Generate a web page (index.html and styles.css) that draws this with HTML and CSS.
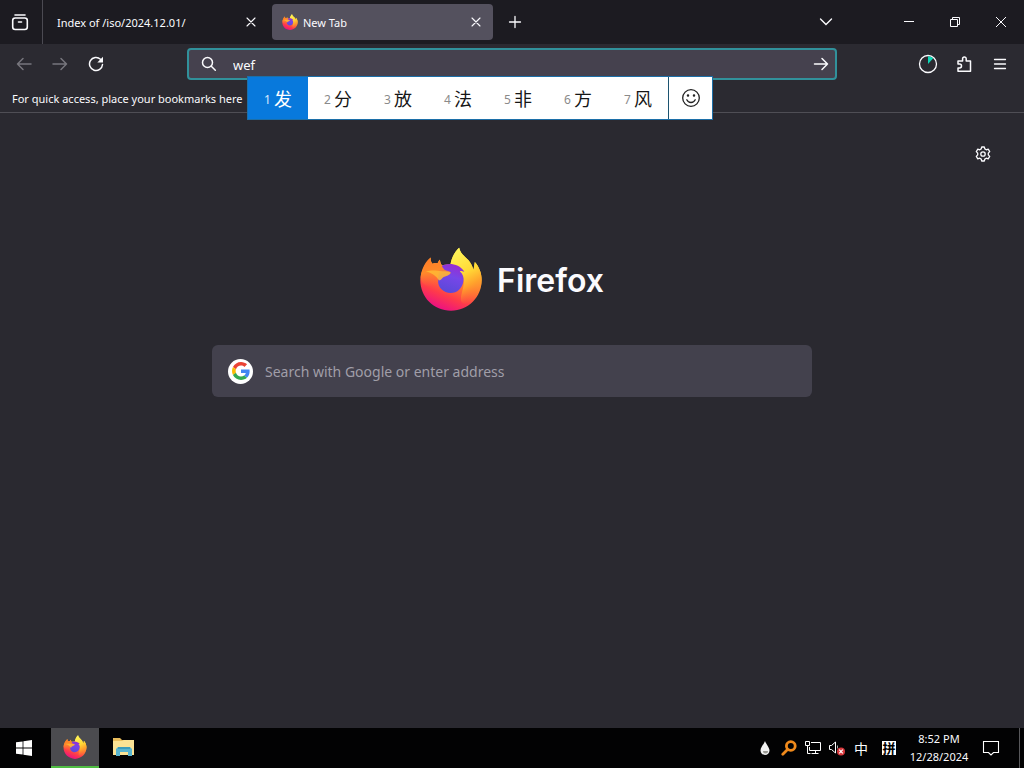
FILE: index.html
```html
<!DOCTYPE html>
<html lang="en">
<head>
<meta charset="utf-8">
<meta name="viewport" content="width=device-width, initial-scale=1">
<title>New Tab</title>
<link rel="stylesheet" href="styles.css">
</head>
<body>
<svg class="defs" aria-hidden="true">
  <defs>
    <linearGradient id="fx-body" x1="0.8" y1="0.05" x2="0.4" y2="1">
      <stop offset="0" stop-color="#fff04a"/><stop offset="0.3" stop-color="#ffc02c"/><stop offset="0.55" stop-color="#ff7a30"/><stop offset="0.78" stop-color="#ff3b4a"/><stop offset="1" stop-color="#ec1280"/>
    </linearGradient>
    <linearGradient id="fx-flame" x1="0.3" y1="0" x2="0.6" y2="1">
      <stop offset="0" stop-color="#fff65a"/><stop offset="0.45" stop-color="#ffd936"/><stop offset="0.7" stop-color="#ffa22c"/><stop offset="1" stop-color="#ff6038" stop-opacity="0"/>
    </linearGradient>
    <linearGradient id="fx-globe" x1="0.7" y1="0" x2="0.4" y2="1">
      <stop offset="0" stop-color="#9a2bd0"/><stop offset="0.45" stop-color="#7646e8"/><stop offset="1" stop-color="#5a49d8"/>
    </linearGradient>
    <linearGradient id="fx-head" x1="0.1" y1="0" x2="0.3" y2="1">
      <stop offset="0" stop-color="#ff7a26"/><stop offset="0.5" stop-color="#ff8a2a"/><stop offset="1" stop-color="#ff5a3c" stop-opacity="0"/>
    </linearGradient>
  </defs>
  <symbol id="firefox" viewBox="16 10 190 196">
    <path fill="url(#fx-body)" d="M49 42C48 50 50 56 54 61C60 58 66 58 70 60C72 55 74 51 77 49C78 57 80 62 84 66C94 63 102 64 110 64C112 44 122 24 136 12C140 30 152 38 164 50C172 59 176 68 180 80L184 56C197 70 205 91 205 111C205 163 164 205 111 205C58 205 17 164 17 111C17 96 22 82 28 72C33 60 41 50 49 42Z"/>
    <path fill="url(#fx-flame)" d="M136 12C140 30 152 38 164 50C172 59 176 68 180 80L184 56C197 70 205 91 205 111C205 145 184 174 158 184C126 184 150 146 151 116C151 94 130 76 108 68C112 44 122 24 136 12Z"/>
    <path fill="url(#fx-globe)" d="M78 70C98 58 134 58 152 86C143 82 140 83 138 84C148 93 151 103 149 115C146 137 130 151 110 151C88 151 70 134 71 112C72 96 74 80 78 70Z"/>
    <path fill="url(#fx-head)" d="M49 42C48 50 50 56 54 61C60 58 66 58 70 60C72 55 74 51 77 49C78 60 83 70 91 80C98 84 106 84 110 88C108 96 98 98 90 101C82 104 84 111 74 112C72 120 72 126 74 132C50 136 22 132 18 104C20 76 34 52 49 42Z"/>
    <path fill="#ffbd35" opacity=".8" d="M34 84C54 80 66 82 84 84C96 84 106 84 110 88C108 96 98 98 90 101C82 104 84 111 74 112C66 98 52 90 34 84Z"/>
  </symbol>
  <symbol id="close" viewBox="0 0 16 16"><path d="M4 4l8 8M12 4l-8 8" fill="none" stroke="currentColor" stroke-width="1.1" stroke-linecap="round"/></symbol>
</svg>

<header class="browser">
  <div class="tabbar">
    <button class="view-btn" aria-label="View recent browsing">
      <svg class="ic20" viewBox="0 0 20 20" fill="none" stroke="currentColor" stroke-width="1.600" stroke-linecap="round"><path d="M5 3h10"/><rect x="2.700" y="6" width="14.600" height="11.500" rx="2.500"/><path d="M8.500 10h3" /></svg>
    </button>
    <div class="tab">
      <span class="tab-label">Index of /iso/2024.12.01/</span>
      <button class="tab-close" aria-label="Close tab"><svg class="ic16"><use href="#close"/></svg></button>
    </div>
    <div class="tab active">
      <svg class="ic16"><use href="#firefox"/></svg>
      <span class="tab-label">New Tab</span>
      <button class="tab-close" aria-label="Close tab"><svg class="ic16"><use href="#close"/></svg></button>
    </div>
    <button class="new-tab" aria-label="Open a new tab"><svg class="ic16" viewBox="0 0 16 16"><path d="M8 2.500v11M2.500 8h11" fill="none" stroke="currentColor" stroke-width="1.300" stroke-linecap="round"/></svg></button>
    <button class="list-tabs" aria-label="List all tabs"><svg class="ic16" viewBox="0 0 16 16"><path d="M2.500 5l5.500 5.500L13.500 5" fill="none" stroke="currentColor" stroke-width="1.400" stroke-linecap="round"/></svg></button>
    <div class="window-btns">
      <button aria-label="Minimize"><svg class="ic16" viewBox="0 0 16 16"><path d="M3 7.500h10" stroke="currentColor"/></svg></button>
      <button aria-label="Restore"><svg class="ic16" viewBox="0 0 16 16" fill="none" stroke="currentColor"><path d="M3.500 5.500h7v7h-7zM5.500 5.500v-2h7v7h-2"/></svg></button>
      <button aria-label="Close window"><svg class="ic16" viewBox="0 0 16 16"><path d="M3 3l10 10M13 3l-10 10" stroke="currentColor"/></svg></button>
    </div>
  </div>

  <div class="navbar">
    <div class="nav-side">
      <button class="dim" aria-label="Back"><svg class="ic16" viewBox="0 0 16 16"><path d="M15 8H1.500M7 2.500L1.500 8L7 13.500" fill="none" stroke="currentColor" stroke-width="1.500" stroke-linecap="round" stroke-linejoin="round"/></svg></button>
      <button class="dim" aria-label="Forward"><svg class="ic16" viewBox="0 0 16 16"><path d="M1 8h13.500M9 2.500L14.500 8L9 13.500" fill="none" stroke="currentColor" stroke-width="1.500" stroke-linecap="round" stroke-linejoin="round"/></svg></button>
      <button aria-label="Reload"><svg class="ic16" viewBox="0 0 16 16"><path d="M12.500 3.300A6.500 6.500 0 1 0 14.500 8.500" fill="none" stroke="currentColor" stroke-width="1.500" stroke-linecap="round"/><path d="M15 .8v5.700H9.300z" fill="currentColor"/></svg></button>
    </div>
    <div class="urlbar">
      <svg class="ic16" viewBox="0 0 16 16" fill="none" stroke="currentColor" stroke-width="1.500" stroke-linecap="round"><circle cx="6.500" cy="6.500" r="5"/><path d="M10.300 10.300l4 4"/></svg>
      <input class="url-input" type="text" aria-label="Search or enter address" value="wef">
      <button class="go" aria-label="Go"><svg class="ic16" viewBox="0 0 16 16"><path d="M1.500 8h13M9 2.500L14.500 8L9 13.500" fill="none" stroke="currentColor" stroke-width="1.500" stroke-linecap="round" stroke-linejoin="round"/></svg></button>
      <div class="ime">
        <button class="cand selected"><span class="num">1</span>发</button>
        <button class="cand"><span class="num">2</span>分</button>
        <button class="cand"><span class="num">3</span>放</button>
        <button class="cand"><span class="num">4</span>法</button>
        <button class="cand"><span class="num">5</span>非</button>
        <button class="cand"><span class="num">6</span>方</button>
        <button class="cand"><span class="num">7</span>风</button>
        <button class="ime-emoji" aria-label="Emoji"><svg class="ic20" viewBox="0 0 20 20" fill="none" stroke="#222" stroke-width="1.300" stroke-linecap="round"><circle cx="10" cy="10" r="8.300"/><path d="M5.800 11.800c1.600 3.600 6.800 3.600 8.400 0"/><circle cx="7" cy="7.500" r=".6" fill="#222"/><circle cx="13" cy="7.500" r=".6" fill="#222"/></svg></button>
      </div>
    </div>
    <div class="nav-side end">
      <button aria-label="Downloads"><svg class="ic20" viewBox="0 0 20 20"><circle cx="10" cy="10" r="8.500" fill="none" stroke="currentColor" stroke-width="1.300"/><path d="M10 10V2.200a7.800 7.800 0 0 1 5.200 2z" fill="#10d8b8"/></svg></button>
      <button aria-label="Extensions"><svg class="ic16" viewBox="0 0 16 16"><path d="M2 15.200V11.900h1.600a1.900 1.900 0 0 0 0-3.800H2V5h4.600V2.800a1.800 1.800 0 0 1 3.600 0V5h4.300v10.200z" fill="none" stroke="currentColor" stroke-width="1.500" stroke-linejoin="round"/></svg></button>
      <button aria-label="Open application menu"><svg class="ic16" viewBox="0 0 16 16"><path d="M2.500 3.500h11M2.500 8h11M2.500 12.500h11" stroke="currentColor" stroke-width="1.300" stroke-linecap="round"/></svg></button>
    </div>
  </div>
  <div class="bookmarks">For quick access, place your bookmarks here</div>
</header>

<main class="page">
  <button class="settings" aria-label="Personalize new tab"><svg class="ic16" viewBox="0 0 16 16" fill="none" stroke="currentColor" stroke-width="1.300" stroke-linejoin="round"><path d="M6.700 1h2.600l.5 1.900 1.500.9 1.900-.6 1.500 2.400-1.400 1.500v1.800l1.400 1.500-1.500 2.400-1.900-.6-1.500.9-.5 1.900H6.700l-.5-1.900-1.500-.9-1.900.6-1.500-2.400 1.400-1.500V7.100L1.300 5.600l1.500-2.400 1.900.6 1.500-.9z"/><circle cx="8" cy="8" r="2.200"/></svg></button>
  <div class="brand">
    <svg class="brand-logo"><use href="#firefox"/></svg>
    <h1 class="brand-name">Firefox</h1>
  </div>
  <div class="search">
    <span class="google"><svg viewBox="0 0 48 48" width="18" height="18"><path fill="#ea4335" d="M24 9.500c3.500 0 6.700 1.200 9.200 3.600l6.900-6.900C35.900 2.400 30.500 0 24 0 14.600 0 6.500 5.400 2.600 13.200l8 6.200C12.400 13.700 17.700 9.500 24 9.500z"/><path fill="#4285f4" d="M47 24.600c0-1.600-.2-3.100-.4-4.600H24v9h12.900c-.6 3-2.300 5.500-4.800 7.200l7.700 6C44.400 38 47 31.800 47 24.600z"/><path fill="#fbbc05" d="M10.500 28.600c-.5-1.500-.8-3-.8-4.600s.3-3.100.8-4.600l-8-6.200C.9 16.500 0 20.100 0 24s.9 7.500 2.600 10.800z"/><path fill="#34a853" d="M24 48c6.500 0 11.900-2.100 15.900-5.800l-7.700-6c-2.200 1.500-4.900 2.300-8.200 2.300-6.300 0-11.600-4.200-13.500-9.900l-8 6.200C6.500 42.600 14.600 48 24 48z"/></svg></span>
    <input class="search-input" type="text" aria-label="Search with Google or enter address" placeholder="Search with Google or enter address">
  </div>
</main>

<footer class="taskbar">
  <button class="start" aria-label="Start"><svg class="ic16" viewBox="0 0 16 16" fill="#fff"><path d="M0 2.300L6.600 1.400v6.200H0zM7.400 1.300L16 0v7.600H7.400zM0 8.400h6.600v6.200L0 13.700zM7.400 8.400H16V16l-8.600-1.300z"/></svg></button>
  <button class="app running" aria-label="Firefox"><svg class="ic24"><use href="#firefox"/></svg></button>
  <button class="app" aria-label="File Explorer"><svg class="ic24" viewBox="0 0 24 24"><path fill="#e9bd5c" d="M2 3h7l2 2h11v4H2z"/><path fill="#fbe294" d="M2 6h9l2-1h10v15H2z"/><path fill="#58b4cf" d="M7 12h12l2 2v7h-4v-4H9v4H5v-7z"/><path fill="#3c9cbc" d="M7 12h12v2H7z"/></svg></button>
  <div class="tray">
    <button aria-label="Droplet"><svg class="ic16" viewBox="0 0 16 16"><path fill="#f2f2f2" d="M8 1c1 3 4.500 6.500 4.500 9.500a4.500 4.500 0 0 1-9 0C3.500 7.500 7 4 8 1z"/><path fill="#9a9a94" d="M6 11h5a2.500 2.500 0 0 1-5 0z"/></svg></button>
    <button aria-label="Search tool"><svg class="ic16" viewBox="0 0 16 16"><circle cx="9.800" cy="6" r="4.400" fill="none" stroke="#f08a1c" stroke-width="2.800"/><path d="M6.500 9.500L1.800 14.200" stroke="#f08a1c" stroke-width="2.800" stroke-linecap="round"/></svg></button>
    <button aria-label="Network"><svg class="ic16" viewBox="0 0 16 16" fill="none" stroke="#fff"><path d="M6 2.500h9.500v8H4.500V7M10.500 10.500v3M6.500 13.500h7M.5 1.500h4v4h-4zM2.500 5.500v8h3"/></svg></button>
    <button aria-label="Volume"><svg class="ic16" viewBox="0 0 16 16"><path d="M.5 5.500h2l4-3.500v11l-4-3.500h-2z" fill="none" stroke="#fff"/><path d="M8.500 5.500v3" stroke="#aaa"/><circle cx="12" cy="11.500" r="4" fill="#d8383c"/><path d="M10.200 9.700l3.600 3.600M13.800 9.700l-3.600 3.600" stroke="#fff" stroke-width="1.200"/></svg></button>
    <button class="lang">中</button>
    <button class="pinyin"><span>拼</span></button>
    <button class="clock"><span>8:52 PM</span><span>12/28/2024</span></button>
    <button class="notify" aria-label="Notifications"><svg class="ic18" viewBox="0 0 18 18"><path d="M1.500 2.500h15v11h-5l-2.500 2.500l-2.500-2.500h-5z" fill="none" stroke="#fff" stroke-width="1.100"/></svg></button>
    <button class="desktop" aria-label="Show desktop"></button>
  </div>
</footer>
</body>
</html>
```
FILE: styles.css
```css
* { box-sizing: border-box; }
body {
  margin: 0;
  min-height: 100vh;
  display: flex;
  flex-direction: column;
  background: #2a2930;
  color: #fbfbfe;
  font: 12px/16px "Noto Sans", "Noto Sans CJK SC", sans-serif;
}
button {
  display: flex;
  align-items: center;
  justify-content: center;
  margin: 0;
  padding: 0;
  border: 0;
  background: none;
  color: inherit;
  font: inherit;
}
input { border: 0; padding: 0; background: none; outline: 0; min-width: 0; font: inherit; color: inherit; }
svg { display: block; flex: none; }
.defs { position: absolute; width: 0; height: 0; }
.ic16 { width: 16px; height: 16px; }
.ic18 { width: 18px; height: 18px; }
.ic20 { width: 20px; height: 20px; }
.ic24 { width: 24px; height: 24px; }

.tabbar { display: flex; align-items: center; height: 44px; background: #1c1b21; }
.view-btn { width: 43px; height: 44px; padding-right: 3px; border-right: 1px solid #4b4a52; }
.tab { display: flex; align-items: center; width: 221px; height: 36px; padding: 0 5px 0 10px; border-radius: 4px; font-size: 11px; }
.tab:not(.active) { width: 225px; margin-right: 4px; padding-left: 14px; }
.tab.active { gap: 5px; background: #54515e; }
.tab-label { flex: 1; padding-top: 1px; white-space: nowrap; }
.tab-close { width: 24px; height: 24px; }
.new-tab { width: 32px; height: 32px; margin-left: 6px; }
.list-tabs { width: 36px; height: 36px; margin-left: auto; margin-right: 42px; }
.window-btns { display: flex; }
.window-btns button { width: 46px; height: 44px; }

.navbar { display: flex; align-items: center; height: 40px; background: #2b2a31; }
.nav-side { display: flex; width: 187px; padding-left: 6px; }
.nav-side.end { justify-content: flex-end; padding: 0 6px; }
.nav-side button { width: 36px; height: 32px; }
.dim { color: #77767d; }
.urlbar {
  position: relative;
  flex: 1;
  display: flex;
  align-items: center;
  height: 32px;
  padding-left: 12px;
  border: 2px solid #31919b;
  border-radius: 4px;
  background: #45414e;
}
.url-input { flex: 1; height: 26px; margin-left: 16px; padding-top: 2px; font-size: 13px; }
.go { width: 28px; height: 28px; }
.ime {
  position: absolute;
  z-index: 2;
  top: 26px;
  left: 58px;
  display: flex;
  height: 44px;
  border: 1px solid #1c6fa8;
  background: #fff;
  color: #161616;
  font: 18px/24px "Noto Sans CJK SC", sans-serif;
}
.cand { width: 60px; gap: 3px; }
.cand.selected { background: #0879dc; color: #fff; }
.num { padding-top: 3px; color: #8a8a8a; font: 12px/16px "Noto Sans", sans-serif; }
.selected .num { color: #d8ebff; }
.ime-emoji { width: 44px; border-left: 1px solid #1c5470; }
.bookmarks { height: 29px; padding: 7px 12px; border-bottom: 1px solid #4f4e55; background: #2b2a31; font-size: 11px; }

.page { flex: 1; display: flex; flex-direction: column; align-items: center; padding: 25px 25px 0; }
.settings { align-self: flex-end; width: 32px; height: 32px; }
.brand { display: flex; align-items: center; gap: 15px; height: 66px; margin: 76px 0 33px; }
.brand-logo { width: 62px; height: 64px; }
.brand-name { margin: 0; padding-top: 3px; font: 600 32px/40px Inter, sans-serif; }
.search { display: flex; align-items: center; gap: 12px; width: 100%; max-width: 600px; height: 52px; padding: 0 16px; border-radius: 6px; background: #43414d; }
.google { display: grid; place-items: center; width: 25px; height: 25px; border-radius: 50%; background: #fff; }
.search-input { flex: 1; height: 40px; font-size: 14px; }
.search-input::placeholder { color: #a09ea8; opacity: 1; }

.taskbar { display: flex; height: 40px; background: #020203; }
.start { width: 48px; margin-right: 3px; }
.app { width: 48px; border-bottom: 2px solid transparent; }
.running { border-bottom-color: #4fbd43; background: #4b4b4f; }
.tray { display: flex; margin-left: auto; font-size: 11px; line-height: 18px; }
.tray button { width: 24px; }
.tray .lang { font: 14px/20px "Noto Sans CJK SC", sans-serif; }
.tray .pinyin { width: 32px; }
.pinyin span { width: 14px; background: #fff; color: #000; font: 700 13px/14px "Noto Sans CJK SC", sans-serif; }
.tray .clock { flex-direction: column; width: 68px; }
.tray .notify { width: 36px; margin-right: 10px; }
.tray .desktop { width: 5px; border-left: 1px solid #57575a; }
```
